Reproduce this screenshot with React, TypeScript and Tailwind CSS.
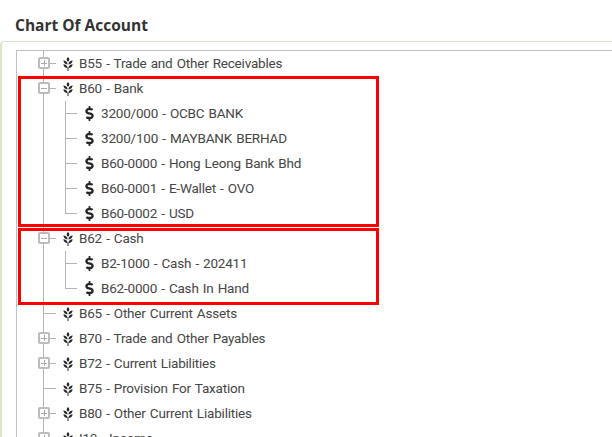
import { FaDollarSign } from "react-icons/fa";

type Row = { label: string; kind: "plus" | "minus" | "none" | "child"; last?: boolean };

const rows: Row[] = [
  { label: "B55 - Trade and Other Receivables", kind: "plus" },
  { label: "B60 - Bank", kind: "minus" },
  { label: "3200/000 - OCBC BANK", kind: "child" },
  { label: "3200/100 - MAYBANK BERHAD", kind: "child" },
  { label: "B60-0000 - Hong Leong Bank Bhd", kind: "child" },
  { label: "B60-0001 - E-Wallet - OVO", kind: "child" },
  { label: "B60-0002 - USD", kind: "child", last: true },
  { label: "B62 - Cash", kind: "minus" },
  { label: "B2-1000 - Cash - 202411", kind: "child" },
  { label: "B62-0000 - Cash In Hand", kind: "child", last: true },
  { label: "B65 - Other Current Assets", kind: "none" },
  { label: "B70 - Trade and Other Payables", kind: "plus" },
  { label: "B72 - Current Liabilities", kind: "plus" },
  { label: "B75 - Provision For Taxation", kind: "none" },
  { label: "B80 - Other Current Liabilities", kind: "plus" },
  { label: "I10 - Income", kind: "plus" },
];

function GrainIcon() {
  return (
    <svg width="10" height="14" viewBox="0 0 10 14" className="shrink-0 text-[#262626]" fill="currentColor">
      <path d="M5 0 C6.8 1.4 6.8 3.4 5 4.8 C3.2 3.4 3.2 1.4 5 0Z" />
      <path d="M0.4 3.6 C2.4 3.6 4.4 4.8 4.6 7.4 C2 7.2 0.6 6 0.4 3.6Z" />
      <path d="M9.6 3.6 C7.6 3.6 5.6 4.8 5.4 7.4 C8 7.2 9.4 6 9.6 3.6Z" />
      <path d="M0.4 7.2 C2.4 7.2 4.4 8.4 4.6 11 C2 10.8 0.6 9.6 0.4 7.2Z" />
      <path d="M9.6 7.2 C7.6 7.2 5.6 8.4 5.4 11 C8 10.8 9.4 9.6 9.6 7.2Z" />
      <rect x="4.5" y="10.5" width="1" height="3.5" />
    </svg>
  );
}

function Toggle({ kind }: { kind: "plus" | "minus" }) {
  return (
    <span className="absolute -left-[6px] top-[6px] flex h-[12px] w-[12px] items-center justify-center rounded-[2px] border-2 border-[#bcbcbc] bg-white">
      <span className="relative block h-[1px] w-[6px] bg-[#a8a8a8]">
        {kind === "plus" && <span className="absolute left-[2.5px] top-[-2.5px] block h-[6px] w-[1px] bg-[#a8a8a8]" />}
      </span>
    </span>
  );
}

function TreeRow({ row }: { row: Row }) {
  const child = row.kind === "child";
  return (
    <div className="flex h-[25px] items-stretch pl-[26px] text-[13.5px] tracking-[-0.2px] [word-spacing:1px] text-[#464646]">
      {child ? (
        <>
          <div className="w-[22px] border-l border-[#b4b4b4]" />
          <div className={`w-[12px] border-l border-[#b4b4b4] ${row.last ? "h-[13px] border-b" : ""}`}>
            {!row.last && <div className="mt-[12px] h-px bg-[#b4b4b4]" />}
          </div>
          <div className="flex items-center gap-[7px] pl-[8px]">
            <FaDollarSign className="h-[15px] w-[9px] shrink-0 text-[#262626]" />
            <span className="whitespace-nowrap">{row.label}</span>
          </div>
        </>
      ) : (
        <>
          <div className="w-[20px] border-l border-[#b4b4b4]">
            <div className="relative">
              <div className="absolute top-[12px] left-0 h-px w-[12px] bg-[#b4b4b4]" />
              {row.kind !== "none" && <Toggle kind={row.kind} />}
            </div>
          </div>
          <div className="flex items-center gap-[6px]">
            <GrainIcon />
            <span className="whitespace-nowrap">{row.label}</span>
          </div>
        </>
      )}
    </div>
  );
}

export default function App() {
  return (
    <div className="relative h-[437px] w-[612px] overflow-hidden bg-white font-['Roboto',sans-serif]">
      <h1 className="pl-[15px] pt-[14px] font-['Open_Sans',sans-serif] text-[15.5px] leading-[22px] font-bold text-[#333]">Chart Of Account</h1>
      <div className="mt-[5px] h-[400px] rounded-tl-[4px] border-t border-l-2 border-[#dbe8c8] pt-[8px] pl-[14px]">
        <div className="h-[400px] border-t border-l border-[#c0c0c0]">
          {rows.map((row) => (
            <TreeRow key={row.label} row={row} />
          ))}
        </div>
      </div>
      {/* highlight boxes */}
      <div className="absolute left-[18px] top-[76px] h-[151px] w-[361px] border-[3px] border-[#ff0000]" />
      <div className="absolute left-[18px] top-[228px] h-[77px] w-[361px] border-[3px] border-[#ff0000]" />
    </div>
  );
}
